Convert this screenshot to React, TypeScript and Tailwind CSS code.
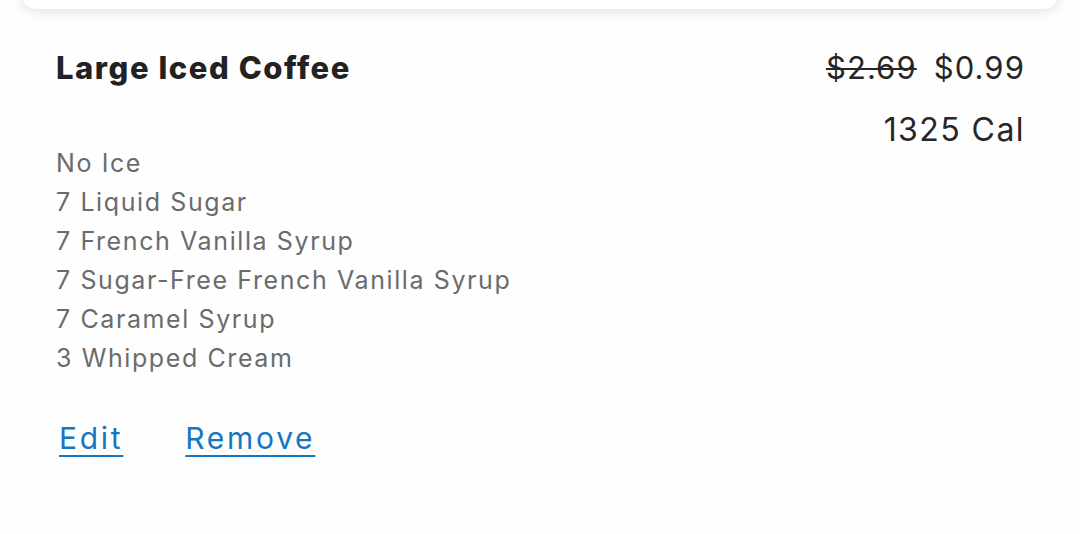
export default function App() {
  const mods = [
    "No Ice",
    "7 Liquid Sugar",
    "7 French Vanilla Syrup",
    "7 Sugar-Free French Vanilla Syrup",
    "7 Caramel Syrup",
    "3 Whipped Cream",
  ];

  return (
    <div
      className="h-[534px] w-[1080px] overflow-hidden bg-[#fefefe]"
      style={{ fontFamily: "Inter, 'Noto Sans', sans-serif" }}
    >
      {/* bottom edge of the card above */}
      <div className="mx-[22px] -mt-[40px] h-[49px] rounded-[14px] bg-white shadow-[0_3px_12px_rgba(0,0,0,0.11)]"></div>

      <div className="flex justify-between px-[56px] pt-[31px]">
        {/* item details */}
        <div className="flex flex-col">
          <h2 className="text-[31px] leading-[56px] font-extrabold tracking-[0.05em] text-[#222]">
            Large Iced Coffee
          </h2>

          <ul className="mt-[48px] text-[25px] leading-[39px] tracking-[0.064em] text-[#6b6b6b]">
            {mods.map((m) => (
              <li key={m}>{m}</li>
            ))}
          </ul>

          <div className="mt-[40px] flex gap-[62px] pl-[3px] text-[30px] leading-[40px] tracking-[0.09em] text-[#1577c2]">
            <a href="#" className="underline underline-offset-[6px] decoration-[2px]">
              Edit
            </a>
            <a href="#" className="underline underline-offset-[6px] decoration-[2px]">
              Remove
            </a>
          </div>
        </div>

        {/* price and calories */}
        <div className="-mr-[1px] flex flex-col items-end text-[#262626]">
          <div className="flex gap-[17px] text-[31px] leading-[56px] tracking-[0.035em]">
            <span className="line-through decoration-[2px]">$2.69</span>
            <span>$0.99</span>
          </div>
          <div className="mt-[14px] text-[32px] leading-[40px] tracking-[0.045em]">
            1325 Cal
          </div>
        </div>
      </div>
    </div>
  );
}
